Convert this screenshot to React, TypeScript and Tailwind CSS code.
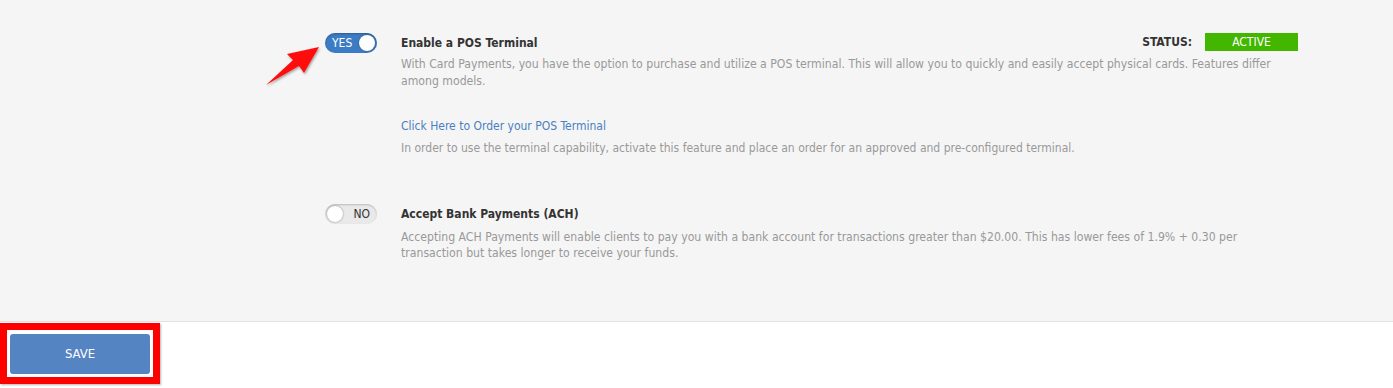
import React from "react";

function Toggle({ on }: { on: boolean }) {
  if (on) {
    return (
      <div className="flex h-[20px] w-[52px] items-center justify-between rounded-full bg-[#3b7cc4] pl-[7px] pr-[2px] shadow-[inset_0_1px_2px_rgba(0,0,0,0.25)]">
        <span className="text-[12px] leading-none text-white">YES</span>
        <span className="h-[16px] w-[16px] rounded-full bg-white shadow-[0_0_2px_rgba(0,0,0,0.4)]" />
      </div>
    );
  }
  return (
    <div className="flex h-[20px] w-[52px] items-center justify-between rounded-full bg-[#e9e9e9] pl-[2px] pr-[7px] shadow-[inset_0_1px_2px_rgba(0,0,0,0.2)]">
      <span className="h-[16px] w-[16px] rounded-full bg-white shadow-[0_0_2px_rgba(0,0,0,0.45)]" />
      <span className="text-[12px] leading-none text-[#333]">NO</span>
    </div>
  );
}

export default function App() {
  return (
    <div className="relative h-[388px] w-[1393px] overflow-hidden bg-white font-['DejaVu_Sans_Condensed','Liberation_Sans',sans-serif]">
      <div className="h-[322px] border-b border-[#e3e3e3] bg-[#f5f5f5] pt-[33px]">
        {/* POS terminal */}
        <div className="ml-[325px] mr-[95px] flex gap-[24px]">
          <Toggle on />
          <div className="flex-1">
            <div className="flex items-start justify-between">
              <h3 className="pt-[3px] text-[12px] font-bold leading-[15px] text-[#333]">Enable a POS Terminal</h3>
              <div className="flex items-center gap-[13px]">
                <span className="text-[12px] font-bold text-[#333]">STATUS:</span>
                <span className="flex h-[18px] w-[93px] items-center justify-center bg-[#43b600] text-[12px] text-white">ACTIVE</span>
              </div>
            </div>
            <p className="mt-[5px] text-[12.15px] leading-[17px] text-[#999]">
              With Card Payments, you have the option to purchase and utilize a POS terminal. This will allow you to quickly and easily accept physical cards. Features differ among models.
            </p>
            <a href="#" className="mt-[28px] block text-[12px] leading-[17px] text-[#4a7fc1]">
              Click Here to Order your POS Terminal
            </a>
            <p className="mt-[5px] text-[12px] leading-[17px] text-[#999]">
              In order to use the terminal capability, activate this feature and place an order for an approved and pre-configured terminal.
            </p>
          </div>
        </div>

        {/* ACH */}
        <div className="ml-[325px] mr-[95px] mt-[47px] flex gap-[24px]">
          <Toggle on={false} />
          <div className="flex-1">
            <h3 className="pt-[3px] text-[12px] font-bold leading-[15px] text-[#333]">Accept Bank Payments (ACH)</h3>
            <p className="mt-[7px] text-[12.15px] leading-[16px] text-[#999]">
              Accepting ACH Payments will enable clients to pay you with a bank account for transactions greater than $20.00. This has lower fees of 1.9% + 0.30 per transaction but takes longer to receive your funds.
            </p>
          </div>
        </div>
      </div>

      <div className="mt-[1px] inline-block border-[7px] border-[#ff0000] px-[3px] pb-[3px] pt-[4px] shadow-[1px_1px_2px_rgba(0,0,0,0.3)]">
        <button className="h-[40px] w-[140px] rounded-[3px] bg-[#5584c3] text-[13px] text-white">SAVE</button>
      </div>

      {/* annotation arrow */}
      <svg className="absolute left-[260px] top-[40px]" width="66" height="52" viewBox="0 0 66 52">
        <defs>
          <filter id="sh" x="-20%" y="-20%" width="140%" height="140%">
            <feDropShadow dx="1" dy="1.5" stdDeviation="1" floodColor="#000" floodOpacity="0.35" />
          </filter>
        </defs>
        <path d="M6 45 L33 20 L27 14 L59 7 L44 33 L39 26 Z" fill="#ff1010" filter="url(#sh)" />
      </svg>
    </div>
  );
}
